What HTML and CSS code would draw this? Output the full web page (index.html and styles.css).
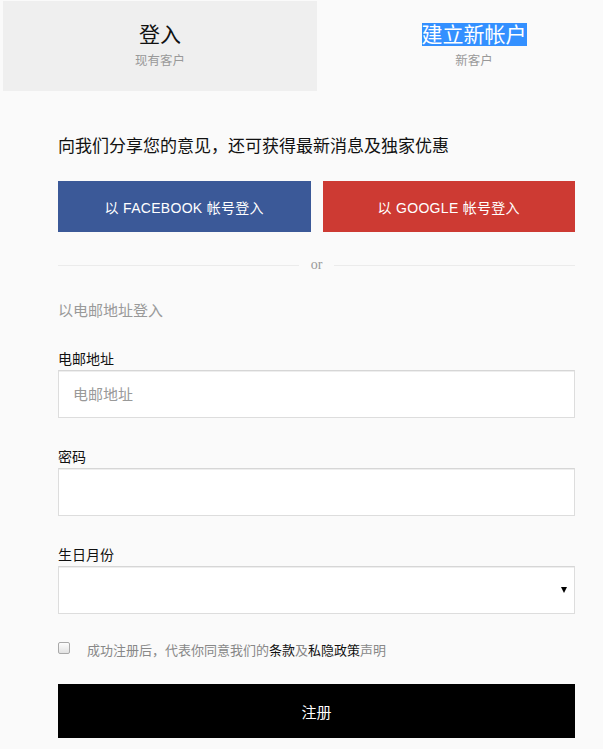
FILE: index.html
```html
<!DOCTYPE html>
<html lang="zh-Hans">
<head>
<meta charset="utf-8">
<title>登入 / 建立新帐户</title>
<link rel="stylesheet" href="styles.css">
</head>
<body>
<div class="page">
  <div class="tabs">
    <div class="tab tab-active">
      <div class="tab-title">登入</div>
      <div class="tab-sub">现有客户</div>
    </div>
    <div class="tab">
      <div class="tab-title"><span class="selected">建立新帐户</span></div>
      <div class="tab-sub">新客户</div>
    </div>
  </div>

  <div class="form">
    <p class="intro">向我们分享您的意见，还可获得最新消息及独家优惠</p>

    <div class="social">
      <button class="btn-social btn-fb" type="button">以 FACEBOOK 帐号登入</button>
      <button class="btn-social btn-google" type="button">以 GOOGLE 帐号登入</button>
    </div>

    <div class="divider"><span class="divider-line"></span><span class="divider-text">or</span><span class="divider-line"></span></div>

    <p class="email-hint">以电邮地址登入</p>

    <div class="field">
      <label class="label">电邮地址</label>
      <input class="input" type="text" placeholder="电邮地址">
    </div>
    <div class="field">
      <label class="label">密码</label>
      <input class="input" type="password">
    </div>
    <div class="field">
      <label class="label">生日月份</label>
      <div class="select-wrap">
        <select class="input select"><option></option></select>
        <svg class="select-arrow" width="6" height="6" viewBox="0 0 6 6"><polygon points="0,0 6,0 3,6" fill="#000"/></svg>
      </div>
    </div>

    <div class="agree">
      <input class="check" type="checkbox">
      <span class="agree-text">成功注册后，代表你同意我们的<span class="dark">条款</span>及<span class="dark">私隐政策</span>声明</span>
    </div>

    <button class="btn-submit" type="button">注册</button>
  </div>
</div>
</body>
</html>
```

FILE: styles.css
```css
* { box-sizing: border-box; }
html, body {
  margin: 0;
  padding: 0;
  background: #fafafa;
  overflow: hidden;
}
body {
  font-family: "Liberation Sans", "Noto Sans CJK SC", sans-serif;
  color: #111;
}
.page {
  width: 603px;
  height: 749px;
  overflow: hidden;
}
.tabs {
  display: flex;
  padding: 1px 0 0 3px;
}
.tab {
  flex: 0 0 314px;
  height: 90px;
  padding-top: 21px;
  text-align: center;
}
.tab-active { background: #efefef; }
.tab-title {
  font-size: 21px;
  line-height: 25px;
  color: #111;
}
.selected {
  background: #3390ff;
  color: #fff;
}
.tab-sub {
  margin-top: 5px;
  font-size: 12.5px;
  line-height: 18px;
  color: #999;
}
.form {
  width: 517px;
  margin-left: 58px;
}
.intro {
  margin: 44px 0 0;
  font-size: 17px;
  line-height: 24px;
  color: #111;
}
.social {
  display: flex;
  gap: 12px;
  margin-top: 22px;
}
.btn-social {
  flex: 1;
  height: 51px;
  border: 0;
  color: #fff;
  font-family: inherit;
  font-size: 14px;
  letter-spacing: 0.3px;
}
.btn-fb { background: #3b5998; }
.btn-google { background: #cd3a33; }
.divider {
  display: flex;
  align-items: center;
  gap: 12px;
  margin-top: 24px;
  height: 18px;
}
.divider-line {
  flex: 1;
  height: 1px;
  background: #ebebeb;
}
.divider-text {
  font-family: "Liberation Serif", serif;
  font-size: 14px;
  color: #999;
  line-height: 18px;
}
.email-hint {
  margin: 26px 0 0;
  font-size: 15px;
  line-height: 22px;
  color: #999;
}
.field {
  margin-top: 27px;
}
.field + .field { margin-top: 29px; }
.label {
  display: block;
  font-size: 14px;
  line-height: 20px;
  color: #111;
  margin-bottom: 1px;
}
.input {
  display: block;
  width: 100%;
  height: 48px;
  border: 1px solid #ddd;
  border-top-color: #d6d6d6;
  box-shadow: inset 0 1px 0 #eee;
  background: #fff;
  padding: 0 14px;
  font-family: inherit;
  font-size: 15px;
  color: #111;
  outline: none;
  border-radius: 0;
}
.input::placeholder { color: #999; }
.select-wrap { position: relative; }
.select {
  -webkit-appearance: none;
  appearance: none;
}
.select-arrow {
  position: absolute;
  right: 8px;
  top: 21px;
}
.agree {
  display: flex;
  align-items: flex-start;
  margin-top: 28px;
  gap: 17px;
}
.check {
  -webkit-appearance: none;
  appearance: none;
  margin: 0;
  width: 12px;
  height: 12px;
  border: 1px solid #a9a9a9;
  border-radius: 2px;
  background: linear-gradient(#fdfdfd, #e2e2e2);
  flex: none;
}
.agree-text {
  font-size: 13px;
  line-height: 18px;
  color: #888;
}
.dark { color: #111; }
.btn-submit {
  display: block;
  width: 100%;
  height: 54px;
  margin-top: 24px;
  border: 0;
  background: #000;
  color: #fff;
  font-family: inherit;
  font-size: 15px;
}
```
